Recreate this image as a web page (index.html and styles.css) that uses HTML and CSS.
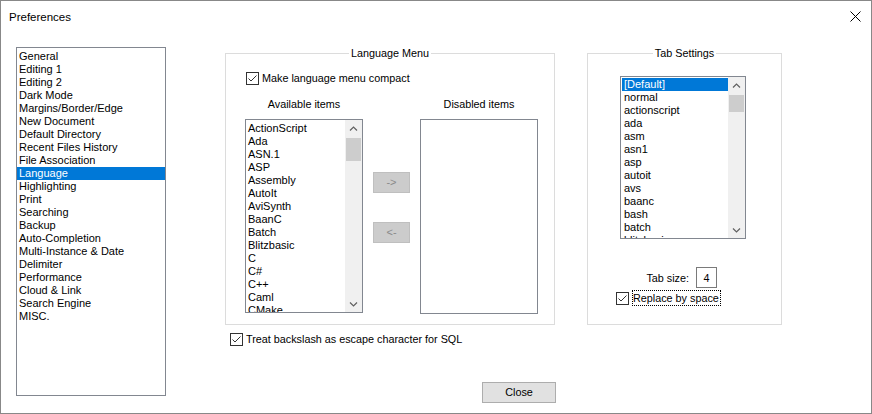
FILE: index.html
```html
<!DOCTYPE html>
<html>
<head>
<meta charset="utf-8">
<link rel="stylesheet" href="styles.css">
</head>
<body>
<div class="window">
  <div class="titlebar">
    <span class="title">Preferences</span>
    <svg class="close-x" width="11" height="11" viewBox="0 0 11 11"><path d="M0.5 0.5 L10.5 10.5 M10.5 0.5 L0.5 10.5" stroke="#000" stroke-width="1" fill="none"/></svg>
  </div>
  <div class="content">
    <div class="navlist">
      <div class="item">General</div>
      <div class="item">Editing 1</div>
      <div class="item">Editing 2</div>
      <div class="item">Dark Mode</div>
      <div class="item">Margins/Border/Edge</div>
      <div class="item">New Document</div>
      <div class="item">Default Directory</div>
      <div class="item">Recent Files History</div>
      <div class="item">File Association</div>
      <div class="item selected">Language</div>
      <div class="item">Highlighting</div>
      <div class="item">Print</div>
      <div class="item">Searching</div>
      <div class="item">Backup</div>
      <div class="item">Auto-Completion</div>
      <div class="item">Multi-Instance &amp; Date</div>
      <div class="item">Delimiter</div>
      <div class="item">Performance</div>
      <div class="item">Cloud &amp; Link</div>
      <div class="item">Search Engine</div>
      <div class="item">MISC.</div>
    </div>
    <div class="main">
      <div class="groups">
        <div class="group lang-group">
          <div class="group-title">Language Menu</div>
          <label class="check compact">
            <span class="box"><svg width="11" height="11" viewBox="0 0 11 11"><path d="M1.5 5.5 L4 8 L9.5 2.5" stroke="#333" stroke-width="1" fill="none"/></svg></span>
            <span>Make language menu compact</span>
          </label>
          <div class="lm-grid">
            <div class="col-label">Available items</div>
            <div></div>
            <div class="col-label">Disabled items</div>
            <div class="listbox avail">
              <div class="rows">
                <div class="item">ActionScript</div>
                <div class="item">Ada</div>
                <div class="item">ASN.1</div>
                <div class="item">ASP</div>
                <div class="item">Assembly</div>
                <div class="item">AutoIt</div>
                <div class="item">AviSynth</div>
                <div class="item">BaanC</div>
                <div class="item">Batch</div>
                <div class="item">Blitzbasic</div>
                <div class="item">C</div>
                <div class="item">C#</div>
                <div class="item">C++</div>
                <div class="item">Caml</div>
                <div class="item">CMake</div>
              </div>
              <div class="scrollbar">
                <div class="sb-btn"><svg width="9" height="6" viewBox="0 0 9 6"><path d="M1 4.5 L4.5 1 L8 4.5" stroke="#606060" stroke-width="1.2" fill="none"/></svg></div>
                <div class="thumb avail-thumb"></div>
                <div class="sb-space"></div>
                <div class="sb-btn"><svg width="9" height="6" viewBox="0 0 9 6"><path d="M1 1.5 L4.5 5 L8 1.5" stroke="#606060" stroke-width="1.2" fill="none"/></svg></div>
              </div>
            </div>
            <div class="movers">
              <div class="mover">-&gt;</div>
              <div class="mover">&lt;-</div>
            </div>
            <div class="listbox disabled-list"></div>
          </div>
        </div>
        <div class="group tab-group">
          <div class="group-title">Tab Settings</div>
          <div class="listbox tablist">
            <div class="rows">
              <div class="item selected">[Default]</div>
              <div class="item">normal</div>
              <div class="item">actionscript</div>
              <div class="item">ada</div>
              <div class="item">asm</div>
              <div class="item">asn1</div>
              <div class="item">asp</div>
              <div class="item">autoit</div>
              <div class="item">avs</div>
              <div class="item">baanc</div>
              <div class="item">bash</div>
              <div class="item">batch</div>
              <div class="item">blitzbasic</div>
            </div>
            <div class="scrollbar">
              <div class="sb-btn"><svg width="9" height="6" viewBox="0 0 9 6"><path d="M1 4.5 L4.5 1 L8 4.5" stroke="#606060" stroke-width="1.2" fill="none"/></svg></div>
              <div class="thumb tab-thumb"></div>
              <div class="sb-space"></div>
              <div class="sb-btn"><svg width="9" height="6" viewBox="0 0 9 6"><path d="M1 1.5 L4.5 5 L8 1.5" stroke="#606060" stroke-width="1.2" fill="none"/></svg></div>
            </div>
          </div>
          <div class="tabsize-row">
            <span>Tab size:</span>
            <span class="numbox">4</span>
          </div>
          <label class="check replace">
            <span class="box"><svg width="11" height="11" viewBox="0 0 11 11"><path d="M1.5 5.5 L4 8 L9.5 2.5" stroke="#333" stroke-width="1" fill="none"/></svg></span>
            <span class="focus">Replace by space</span>
          </label>
        </div>
      </div>
      <label class="check backslash">
        <span class="box"><svg width="11" height="11" viewBox="0 0 11 11"><path d="M1.5 5.5 L4 8 L9.5 2.5" stroke="#333" stroke-width="1" fill="none"/></svg></span>
        <span>Treat backslash as escape character for SQL</span>
      </label>
      <div class="close-btn">Close</div>
    </div>
  </div>
</div>
</body>
</html>
```

FILE: styles.css
```css
* { box-sizing: border-box; }
html, body { margin: 0; padding: 0; background: #fff; }
body { font-family: "Liberation Sans", Arial, sans-serif; color: #000; }

.window {
  width: 872px;
  height: 414px;
  border: 1px solid #888;
  background: #fff;
  display: flex;
  flex-direction: column;
}

.titlebar {
  height: 30px;
  display: flex;
  align-items: center;
  justify-content: space-between;
  padding: 0 10px 0 8px;
}
.title { font-size: 11.5px; line-height: 14px; padding-top: 1px; }
.close-x { display: block; }

.content {
  display: flex;
  padding: 16px 0 0 15px;
  flex: 1;
}

.navlist {
  width: 150px;
  height: 349px;
  border: 1px solid #828790;
  padding: 2px 0 0 0;
  font-size: 11px;
  overflow: hidden;
}
.item {
  height: 13px;
  line-height: 13px;
  padding-left: 2px;
  white-space: nowrap;
  font-size: 11px;
}
.item.selected { background: #0078d7; color: #fff; }

.main {
  margin-left: 59px;
  padding-top: 6px;
  display: flex;
  flex-direction: column;
}

.groups { display: flex; gap: 32px; }

.group {
  border: 1px solid #dcdcdc;
  height: 272px;
}
.lang-group { width: 330px; }
.tab-group { width: 195px; }

.group-title {
  display: table;
  margin: -8px auto 0;
  padding: 0 2px;
  background: #fff;
  font-size: 10.8px;
  line-height: 14px;
}

.check {
  display: flex;
  align-items: center;
  font-size: 10.8px;
  line-height: 14px;
}
.box {
  width: 13px;
  height: 13px;
  border: 1px solid #333;
  background: #fff;
  display: flex;
  align-items: center;
  justify-content: center;
  margin-right: 3px;
  flex: none;
}
.box svg { display: block; }

.compact { margin: 11px 0 0 20px; }

.lm-grid {
  display: grid;
  grid-template-columns: 118px 57px 118px;
  grid-template-rows: 14px 194px;
  row-gap: 8px;
  margin: 12px 0 0 19px;
}
.col-label {
  text-align: center;
  font-size: 10.8px;
  line-height: 14px;
}

.listbox {
  border: 1px solid #828790;
  background: #fff;
  display: flex;
  overflow: hidden;
}
.rows { flex: 1; overflow: hidden; }
.avail .rows { padding-top: 2px; }

.scrollbar {
  width: 17px;
  background: #f0f0f0;
  display: flex;
  flex-direction: column;
  flex: none;
}
.sb-btn {
  height: 17px;
  display: flex;
  align-items: center;
  justify-content: center;
  flex: none;
}
.sb-btn svg { display: block; }
.thumb { background: #cdcdcd; margin: 1px 1px 0 1px; flex: none; }
.avail-thumb { height: 23px; }
.tab-thumb { height: 17px; }
.sb-space { flex: 1; }

.movers {
  display: flex;
  flex-direction: column;
  gap: 29px;
  padding: 53px 0 0 10px;
}
.mover {
  width: 37px;
  height: 21px;
  background: #cccccc;
  border: 1px solid #bfbfbf;
  color: #8a8a8a;
  font-size: 11px;
  line-height: 19px;
  text-align: center;
}

.disabled-list { height: 195px; }

.tablist {
  width: 126px;
  height: 163px;
  margin: 16px 0 0 32px;
}
.tablist .rows { padding: 1px 0 0 1px; }
.tablist .item { padding-left: 2px; }

.tabsize-row {
  display: flex;
  align-items: center;
  justify-content: flex-end;
  gap: 7px;
  width: 129px;
  margin-top: 28px;
  font-size: 10.8px;
}
.numbox {
  width: 21px;
  height: 21px;
  border: 1px solid #7a7a7a;
  display: flex;
  align-items: center;
  justify-content: center;
  font-size: 10.8px;
}

.replace { margin: 2px 0 0 28px; }
.focus {
  border: 1px dotted #000;
  padding: 0 1px 0 0;
  line-height: 14px;
}

.backslash { margin: 7px 0 0 5px; }

.close-btn {
  width: 74px;
  height: 21px;
  margin: 36px 0 0 257px;
  background: #e1e1e1;
  border: 1px solid #adadad;
  font-size: 10.8px;
  line-height: 19px;
  text-align: center;
}
```
